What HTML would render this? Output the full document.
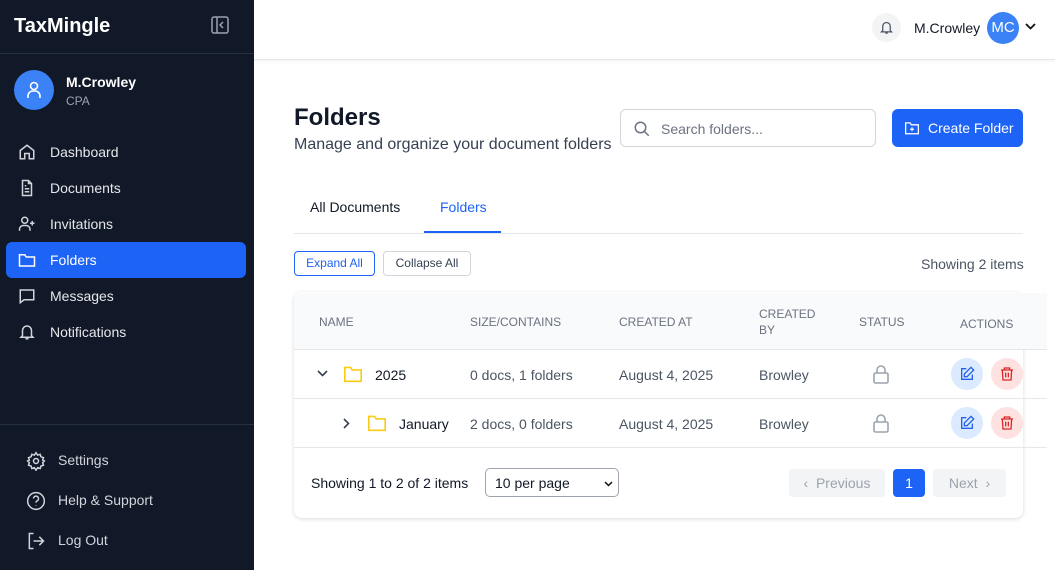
<!DOCTYPE html>
<html><head><meta charset="utf-8"><style>
*{box-sizing:border-box;margin:0;padding:0}
body{width:1055px;height:570px;overflow:hidden;font-family:"Liberation Sans",sans-serif;background:#fff;position:relative;color:#111827}
.sb{position:absolute;left:0;top:0;width:254px;height:570px;background:#111827;color:#e5e7eb}
.logo{position:absolute;left:14px;top:15px;font-size:20px;font-weight:bold;color:#fff}
.hr{position:absolute;left:0;width:254px;height:1px;background:#273042}
.av{position:absolute;left:14px;top:70px;width:40px;height:40px;border-radius:50%;background:#3b82f6}
.nav{position:absolute;left:6px;width:240px;height:36px;border-radius:6px;font-size:14px;line-height:36px;padding-left:44px;color:#e5e7eb}
.nav svg{position:absolute;left:12px;top:9px}
.act{background:#1d63f5;color:#fff}
.top{position:absolute;left:254px;top:0;width:801px;height:60px;border-bottom:1px solid #e5e7eb;box-shadow:0 1px 3px rgba(0,0,0,.06)}
.s{font-size:14px;position:absolute}
.g{color:#6b7280}
.btn{position:absolute;border:1px solid #d1d5db;border-radius:4px;font-size:12px;height:25px;line-height:23px;text-align:center}
.card{position:absolute;left:294px;top:292px;width:729px;height:226px;border-radius:8px;box-shadow:0 1px 4px rgba(0,0,0,.15);background:#fff}
.th{position:absolute;left:294px;top:293px;width:753px;height:57px;background:#f9fafb;border-bottom:1px solid #e5e7eb}
.h{position:absolute;font-size:12px;color:#6b7280;line-height:16px}
.rl{position:absolute;left:294px;width:753px;height:1px;background:#e5e7eb}
.c{position:absolute;font-size:14px;color:#4b5563}
.ib{position:absolute;width:32px;height:32px;border-radius:50%}
</style></head><body>
<div class="sb">
<div class="logo">TaxMingle</div>
<svg style="position:absolute;left:211px;top:16px" width="18" height="18" viewBox="0 0 18 18" fill="none" stroke="#9ca3af" stroke-width="1.5"><rect x="1" y="1" width="16" height="16" rx="2"/><path d="M6 1v16M12 6l-3 3 3 3"/></svg>
<div class="hr" style="top:53px"></div>
<div class="av"><svg style="position:absolute;left:12px;top:10px" width="16" height="20" viewBox="0 0 16 20" fill="none" stroke="#fff" stroke-width="1.6"><circle cx="8" cy="6" r="3.5"/><path d="M2 18v-2a5 5 0 0 1 5-5h2a5 5 0 0 1 5 5v2"/></svg></div>
<div class="s" style="left:66px;top:74px;color:#fff;font-weight:bold;font-size:14px">M.Crowley</div>
<div class="s" style="left:66px;top:94px;font-size:12px;color:#9ca3af">CPA</div>
<div class="nav" style="top:134px"><svg width="18" height="18" viewBox="0 0 24 24" fill="none" stroke="#d1d5db" stroke-width="2"><path d="M3 10l9-7 9 7v11H15v-7H9v7H3z"/></svg>Dashboard</div>
<div class="nav" style="top:170px"><svg width="18" height="18" viewBox="0 0 24 24" fill="none" stroke="#d1d5db" stroke-width="2"><path d="M14 2H6v20h12V6z M14 2v4h4M9 13h6M9 17h6M9 9h2"/></svg>Documents</div>
<div class="nav" style="top:206px"><svg width="18" height="18" viewBox="0 0 24 24" fill="none" stroke="#d1d5db" stroke-width="2"><circle cx="9" cy="7" r="4"/><path d="M2 21v-2a5 5 0 0 1 5-5h4a5 5 0 0 1 5 5v2M19 8v6M16 11h6"/></svg>Invitations</div>
<div class="nav act" style="top:242px"><svg width="18" height="18" viewBox="0 0 24 24" fill="none" stroke="#fff" stroke-width="2"><path d="M2 5h7l2 3h11v12H2z"/></svg>Folders</div>
<div class="nav" style="top:278px"><svg width="18" height="18" viewBox="0 0 24 24" fill="none" stroke="#d1d5db" stroke-width="2"><path d="M3 4h18v13H8l-5 4z"/></svg>Messages</div>
<div class="nav" style="top:314px"><svg width="18" height="18" viewBox="0 0 24 24" fill="none" stroke="#d1d5db" stroke-width="2"><path d="M6 17V10a6 6 0 0 1 12 0v7l2 2H4zM10 21h4"/></svg>Notifications</div>
<div class="hr" style="top:424px"></div>
<div class="nav" style="top:442px;left:14px;color:#d1d5db"><svg width="20" height="20" viewBox="0 0 24 24" fill="none" stroke="#d1d5db" stroke-width="1.8"><circle cx="12" cy="12" r="3"/><path d="M12 2l2 3 3-1 1 3 3 1-1 3 2 1-2 2 1 3-3 1-1 3-3-1-2 3-2-3-3 1-1-3-3-1 1-3-2-2 2-1-1-3 3-1 1-3 3 1z"/></svg>Settings</div>
<div class="nav" style="top:482px;left:14px;color:#d1d5db"><svg width="20" height="20" viewBox="0 0 24 24" fill="none" stroke="#d1d5db" stroke-width="1.8"><circle cx="12" cy="12" r="10"/><path d="M9 9a3 3 0 1 1 4 3c-1 .5-1 1-1 2M12 17v.5"/></svg>Help &amp; Support</div>
<div class="nav" style="top:522px;left:14px;color:#d1d5db"><svg width="20" height="20" viewBox="0 0 24 24" fill="none" stroke="#d1d5db" stroke-width="1.8"><path d="M9 3H4v18h5M16 7l5 5-5 5M21 12H9"/></svg>Log Out</div>
</div>
<div class="top">
<div style="position:absolute;left:618px;top:13px;width:29px;height:29px;border-radius:50%;background:#f3f4f6"><svg style="position:absolute;left:7px;top:7px" width="15" height="15" viewBox="0 0 24 24" fill="none" stroke="#4b5563" stroke-width="2"><path d="M6 17V10a6 6 0 0 1 12 0v7l2 2H4zM10 21h4"/></svg></div>
<div class="s" style="left:660px;top:20px">M.Crowley</div>
<div style="position:absolute;left:733px;top:12px;width:32px;height:32px;border-radius:50%;background:#3b82f6;color:#fff;font-size:15px;text-align:center;line-height:32px">MC</div>
<svg style="position:absolute;left:771px;top:23px" width="11" height="8" viewBox="0 0 11 8" fill="none" stroke="#111" stroke-width="1.8"><path d="M1 1l4.5 4.5L10 1"/></svg>
</div>
<div class="s" style="left:294px;top:104px;font-size:24px;font-weight:bold">Folders</div>
<div class="s" style="left:294px;top:136px;font-size:16px;color:#374151">Manage and organize your document folders</div>
<div style="position:absolute;left:620px;top:109px;width:256px;height:38px;border:1px solid #d1d5db;border-radius:6px"><svg style="position:absolute;left:12px;top:10px" width="18" height="18" viewBox="0 0 24 24" fill="none" stroke="#6b7280" stroke-width="2"><circle cx="10" cy="10" r="7"/><path d="M15 15l6 6"/></svg><span class="s g" style="left:40px;top:11px">Search folders...</span></div>
<div style="position:absolute;left:892px;top:109px;width:131px;height:38px;border-radius:6px;background:#1d63f5;color:#fff;font-size:14px;line-height:38px;padding-left:36px"><svg style="position:absolute;left:12px;top:12px" width="16" height="14" viewBox="0 0 24 22" fill="none" stroke="#fff" stroke-width="2"><path d="M2 3h7l2 3h11v14H2zM12 10v6M9 13h6"/></svg>Create Folder</div>
<div class="s" style="left:310px;top:199px">All Documents</div>
<div class="s" style="left:440px;top:199px;color:#1d63f5">Folders</div>
<div style="position:absolute;left:294px;top:233px;width:729px;height:1px;background:#e5e7eb"></div>
<div style="position:absolute;left:424px;top:231px;width:77px;height:2px;background:#1d63f5"></div>
<div class="btn" style="left:294px;top:251px;width:81px;border-color:#1d63f5;color:#1d63f5">Expand All</div>
<div class="btn" style="left:383px;top:251px;width:88px;color:#374151">Collapse All</div>
<div class="s g" style="left:921px;top:256px;color:#4b5563">Showing 2 items</div>
<div class="card"></div>
<div class="th"></div>
<div class="h" style="left:319px;top:314px">NAME</div>
<div class="h" style="left:470px;top:314px">SIZE/CONTAINS</div>
<div class="h" style="left:619px;top:314px">CREATED AT</div>
<div class="h" style="left:759px;top:306px">CREATED<br>BY</div>
<div class="h" style="left:859px;top:314px">STATUS</div>
<div class="h" style="left:960px;top:316px">ACTIONS</div>
<div class="rl" style="top:398px"></div>
<div class="rl" style="top:447px"></div>
<svg style="position:absolute;left:317px;top:370px" width="11" height="8" viewBox="0 0 11 8" fill="none" stroke="#374151" stroke-width="1.6"><path d="M1 1l4.5 4.5L10 1"/></svg>
<svg style="position:absolute;left:343px;top:418px" width="8" height="11" viewBox="0 0 8 11" fill="none" stroke="#374151" stroke-width="1.6"><path d="M1 1l4.5 4.5L1 10"/></svg>
<svg style="position:absolute;left:343px;top:365px" width="20" height="18" viewBox="0 0 24 22" fill="none" stroke="#facc15" stroke-width="2"><path d="M2 3h7l2 3h11v14H2z"/></svg>
<svg style="position:absolute;left:367px;top:414px" width="20" height="18" viewBox="0 0 24 22" fill="none" stroke="#facc15" stroke-width="2"><path d="M2 3h7l2 3h11v14H2z"/></svg>
<div class="c" style="left:375px;top:367px;color:#111827">2025</div>
<div class="c" style="left:399px;top:416px;color:#111827">January</div>
<div class="c" style="left:470px;top:367px">0 docs, 1 folders</div>
<div class="c" style="left:470px;top:416px">2 docs, 0 folders</div>
<div class="c" style="left:619px;top:367px">August 4, 2025</div>
<div class="c" style="left:619px;top:416px">August 4, 2025</div>
<div class="c" style="left:759px;top:367px">Browley</div>
<div class="c" style="left:759px;top:416px">Browley</div>
<svg style="position:absolute;left:872px;top:364px" width="18" height="20" viewBox="0 0 18 20" fill="none" stroke="#9ca3af" stroke-width="1.6"><rect x="2" y="9" width="14" height="10" rx="1.5"/><path d="M5 9V6a4 4 0 0 1 8 0v3"/></svg>
<svg style="position:absolute;left:872px;top:413px" width="18" height="20" viewBox="0 0 18 20" fill="none" stroke="#9ca3af" stroke-width="1.6"><rect x="2" y="9" width="14" height="10" rx="1.5"/><path d="M5 9V6a4 4 0 0 1 8 0v3"/></svg>
<div class="ib" style="left:951px;top:358px;background:#dbeafe"></div>
<div class="ib" style="left:991px;top:358px;background:#fee2e2"></div>
<div class="ib" style="left:951px;top:407px;background:#dbeafe"></div>
<div class="ib" style="left:991px;top:407px;background:#fee2e2"></div>
<svg style="position:absolute;left:959px;top:366px" width="16" height="16" viewBox="0 0 24 24" fill="none" stroke="#2563eb" stroke-width="2"><path d="M11 4H4v16h16v-7M18 2l4 4-10 10H8v-4z"/></svg>
<svg style="position:absolute;left:959px;top:415px" width="16" height="16" viewBox="0 0 24 24" fill="none" stroke="#2563eb" stroke-width="2"><path d="M11 4H4v16h16v-7M18 2l4 4-10 10H8v-4z"/></svg>
<svg style="position:absolute;left:999px;top:366px" width="16" height="16" viewBox="0 0 24 24" fill="none" stroke="#dc2626" stroke-width="2"><path d="M3 6h18M8 6V3h8v3M5 6l1 15h12l1-15M10 10v7M14 10v7"/></svg>
<svg style="position:absolute;left:999px;top:415px" width="16" height="16" viewBox="0 0 24 24" fill="none" stroke="#dc2626" stroke-width="2"><path d="M3 6h18M8 6V3h8v3M5 6l1 15h12l1-15M10 10v7M14 10v7"/></svg>
<div class="c" style="left:311px;top:475px;color:#111827">Showing 1 to 2 of 2 items</div>
<div style="position:absolute;left:485px;top:468px;width:134px;height:29px;border:1px solid #9ca3af;border-radius:5px;font-size:14px;line-height:28px;padding-left:9px">10 per page<svg style="position:absolute;left:118px;top:12px" width="9" height="6" viewBox="0 0 9 6" fill="none" stroke="#111" stroke-width="1.5"><path d="M1 1l3.5 3.5L8 1"/></svg></div>
<div style="position:absolute;left:789px;top:469px;width:96px;height:28px;background:#f3f4f6;border-radius:4px;color:#9ca3af;font-size:14px;line-height:28px;text-align:center">‹&nbsp; Previous</div>
<div style="position:absolute;left:893px;top:469px;width:32px;height:28px;background:#1d63f5;border-radius:4px;color:#fff;font-size:14px;line-height:28px;text-align:center">1</div>
<div style="position:absolute;left:933px;top:469px;width:73px;height:28px;background:#f3f4f6;border-radius:4px;color:#9ca3af;font-size:14px;line-height:28px;text-align:center">Next &nbsp;›</div>
</body></html>
